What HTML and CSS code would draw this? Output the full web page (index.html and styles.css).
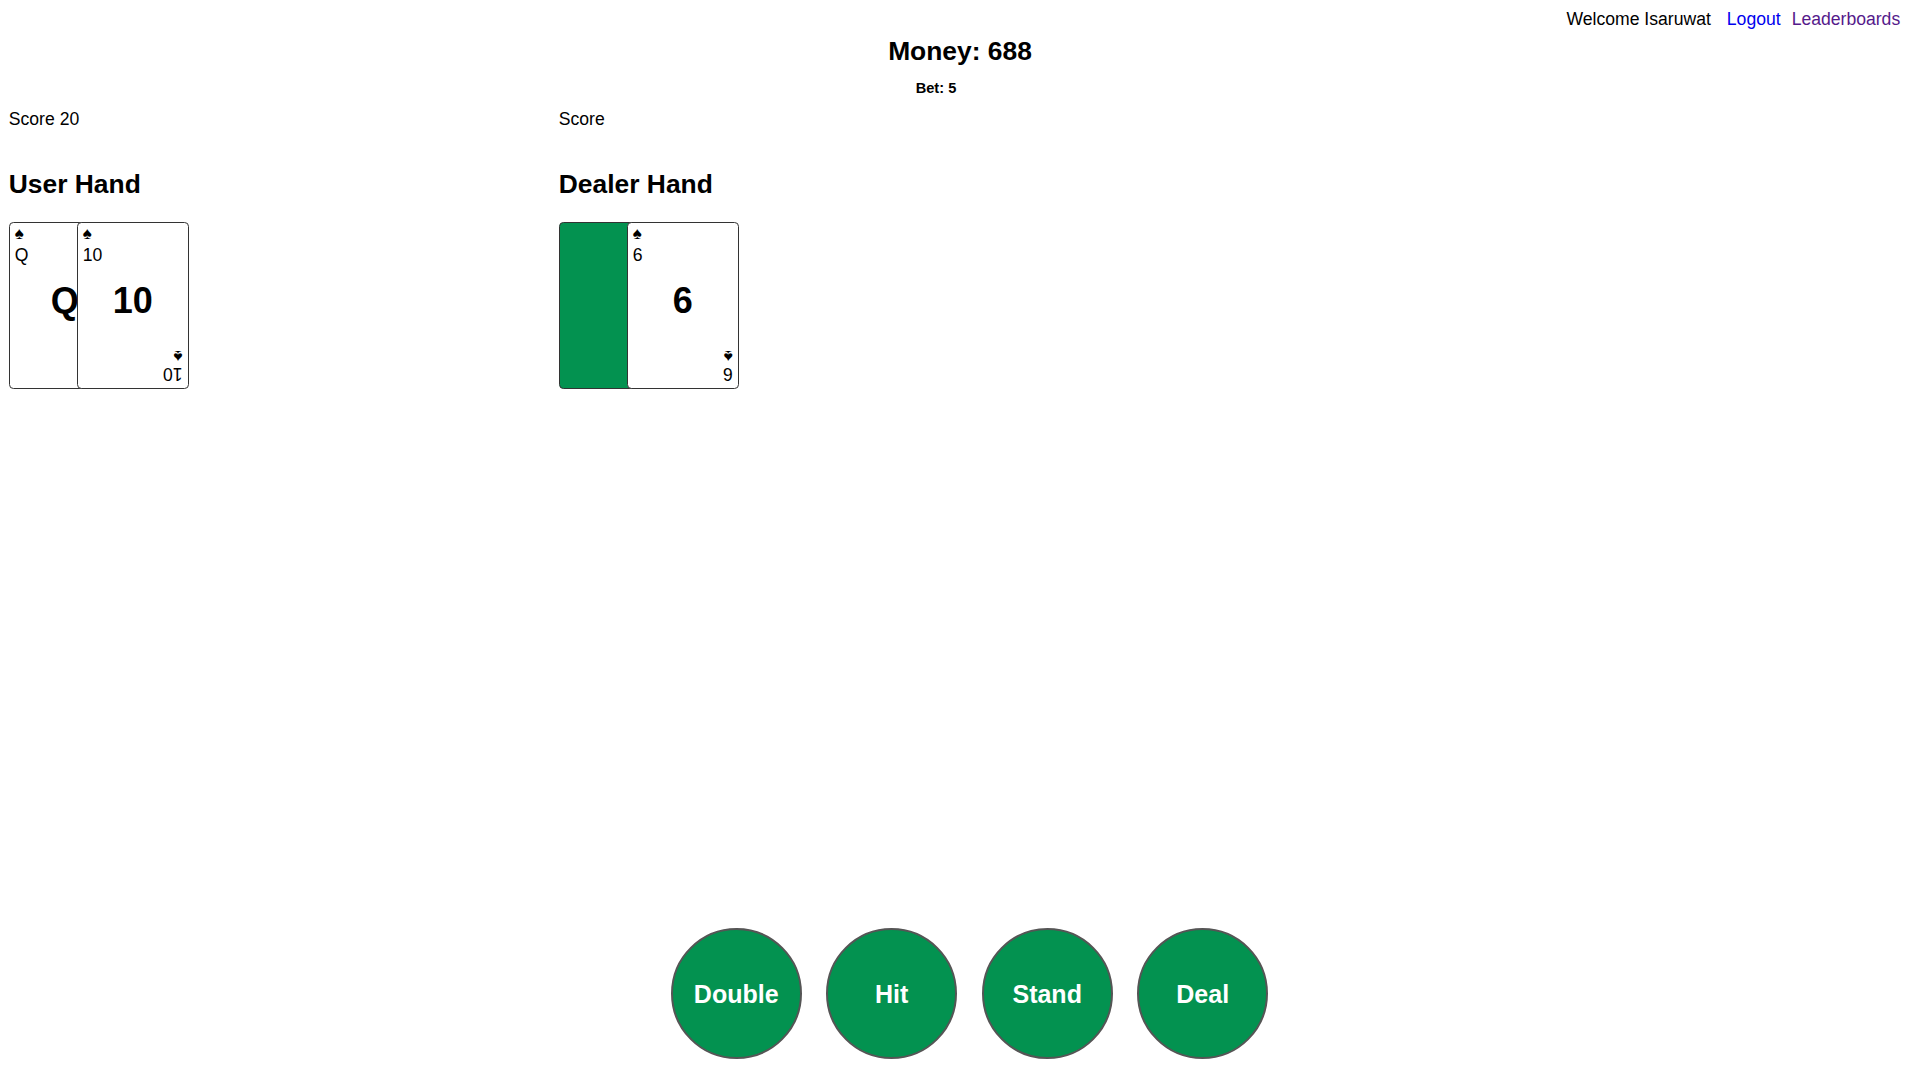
FILE: index.html
```html
<!DOCTYPE html>
<html lang="en">
<head>
<meta charset="utf-8">
<title>Blackjack</title>
<link rel="stylesheet" href="styles.css">
</head>
<body>
  <nav class="topbar">
    <span class="welcome">Welcome Isaruwat</span>
    <a class="nav-link logout" href="#">Logout</a>
    <a class="nav-link leaders" href="#">Leaderboards</a>
  </nav>

  <h2 class="money">Money: 688</h2>
  <h5 class="bet">Bet: 5</h5>

  <div class="hands">
    <section class="hand">
      <p class="score">Score 20</p>
      <h2 class="hand-title">User Hand</h2>
      <div class="cards">
        <div class="card">
          <div class="corner"><span class="suit">&#9824;</span><span class="rank">Q</span></div>
          <div class="center">Q</div>
          <div class="corner corner-bottom"><span class="rank">Q</span><span class="suit">&#9824;</span></div>
        </div>
        <div class="card">
          <div class="corner"><span class="suit">&#9824;</span><span class="rank">10</span></div>
          <div class="center">10</div>
          <div class="corner corner-bottom"><span class="rank">10</span><span class="suit">&#9824;</span></div>
        </div>
      </div>
    </section>
    <section class="hand">
      <p class="score">Score</p>
      <h2 class="hand-title">Dealer Hand</h2>
      <div class="cards">
        <div class="card card-back"></div>
        <div class="card">
          <div class="corner"><span class="suit">&#9824;</span><span class="rank">6</span></div>
          <div class="center">6</div>
          <div class="corner corner-bottom"><span class="rank">6</span><span class="suit">&#9824;</span></div>
        </div>
      </div>
    </section>
  </div>

  <div class="actions">
    <button class="action">Double</button>
    <button class="action">Hit</button>
    <button class="action">Stand</button>
    <button class="action">Deal</button>
  </div>
</body>
</html>
```
FILE: styles.css
```css
* { box-sizing: border-box; }

html, body { height: 100%; }

body {
  margin: 0;
  padding: 0 8.8px;
  font-family: "Liberation Sans", Arial, sans-serif;
  font-size: 17.6px;
  color: #000;
  background: #fff;
  display: flex;
  flex-direction: column;
  min-height: 100vh;
}

.topbar {
  display: flex;
  justify-content: flex-end;
  padding: 9px 11px 0 0;
  line-height: 20px;
  height: 29px;
}

.nav-link { text-decoration: none; }
.logout { color: #0000ee; margin-left: 16px; }
.leaders { color: #551a8b; margin-left: 11px; }

.money {
  margin: 7px 0 0;
  font-size: 26.4px;
  line-height: 30px;
  font-weight: bold;
  text-align: center;
}

.bet {
  margin: 14px 0 0;
  padding-right: 48px;
  font-size: 14.6px;
  line-height: 17px;
  font-weight: bold;
  text-align: center;
}

.hands {
  display: flex;
}

.hand {
  width: 550px;
}

.score {
  margin: 11.8px 0 0;
  line-height: 20px;
}

.hand-title {
  margin: 39.8px 0 0;
  font-size: 26.4px;
  line-height: 30px;
  font-weight: bold;
}

.cards {
  display: flex;
  margin-top: 23.3px;
}

.card {
  position: relative;
  width: 112px;
  height: 167px;
  border: 1px solid #333;
  border-radius: 4.4px;
  background: #fff;
  display: flex;
  flex-direction: column;
  overflow: hidden;
}

.card + .card { margin-left: -44px; }

.card-back { background: #039250; }

.corner {
  display: flex;
  flex-direction: column;
  align-items: flex-start;
  padding: 3px 0 0 5px;
}

.suit {
  font-size: 17px;
  line-height: 15px;
  margin-bottom: 3.9px;
}

.rank {
  font-size: 17.6px;
  line-height: 20px;
}

.corner-bottom {
  align-self: flex-end;
  transform: rotate(180deg);
  padding: 3.5px 5px 0 5px;
}

.corner-bottom .suit {
  margin: 0;
}

.center {
  flex: 1;
  display: flex;
  align-items: center;
  justify-content: center;
  font-size: 36px;
  line-height: 36px;
  font-weight: bold;
  padding-bottom: 11.4px;
}

.actions {
  margin-top: auto;
  display: flex;
  justify-content: center;
  gap: 24.5px;
  padding: 0 0 21px 18.9px;
}

.action {
  width: 131px;
  height: 131px;
  border-radius: 50%;
  border: 2px solid #555;
  background: #039250;
  color: #fff;
  font-family: "Liberation Sans", Arial, sans-serif;
  font-size: 25px;
  font-weight: bold;
  padding: 2px 0 0;
  cursor: pointer;
}
```
